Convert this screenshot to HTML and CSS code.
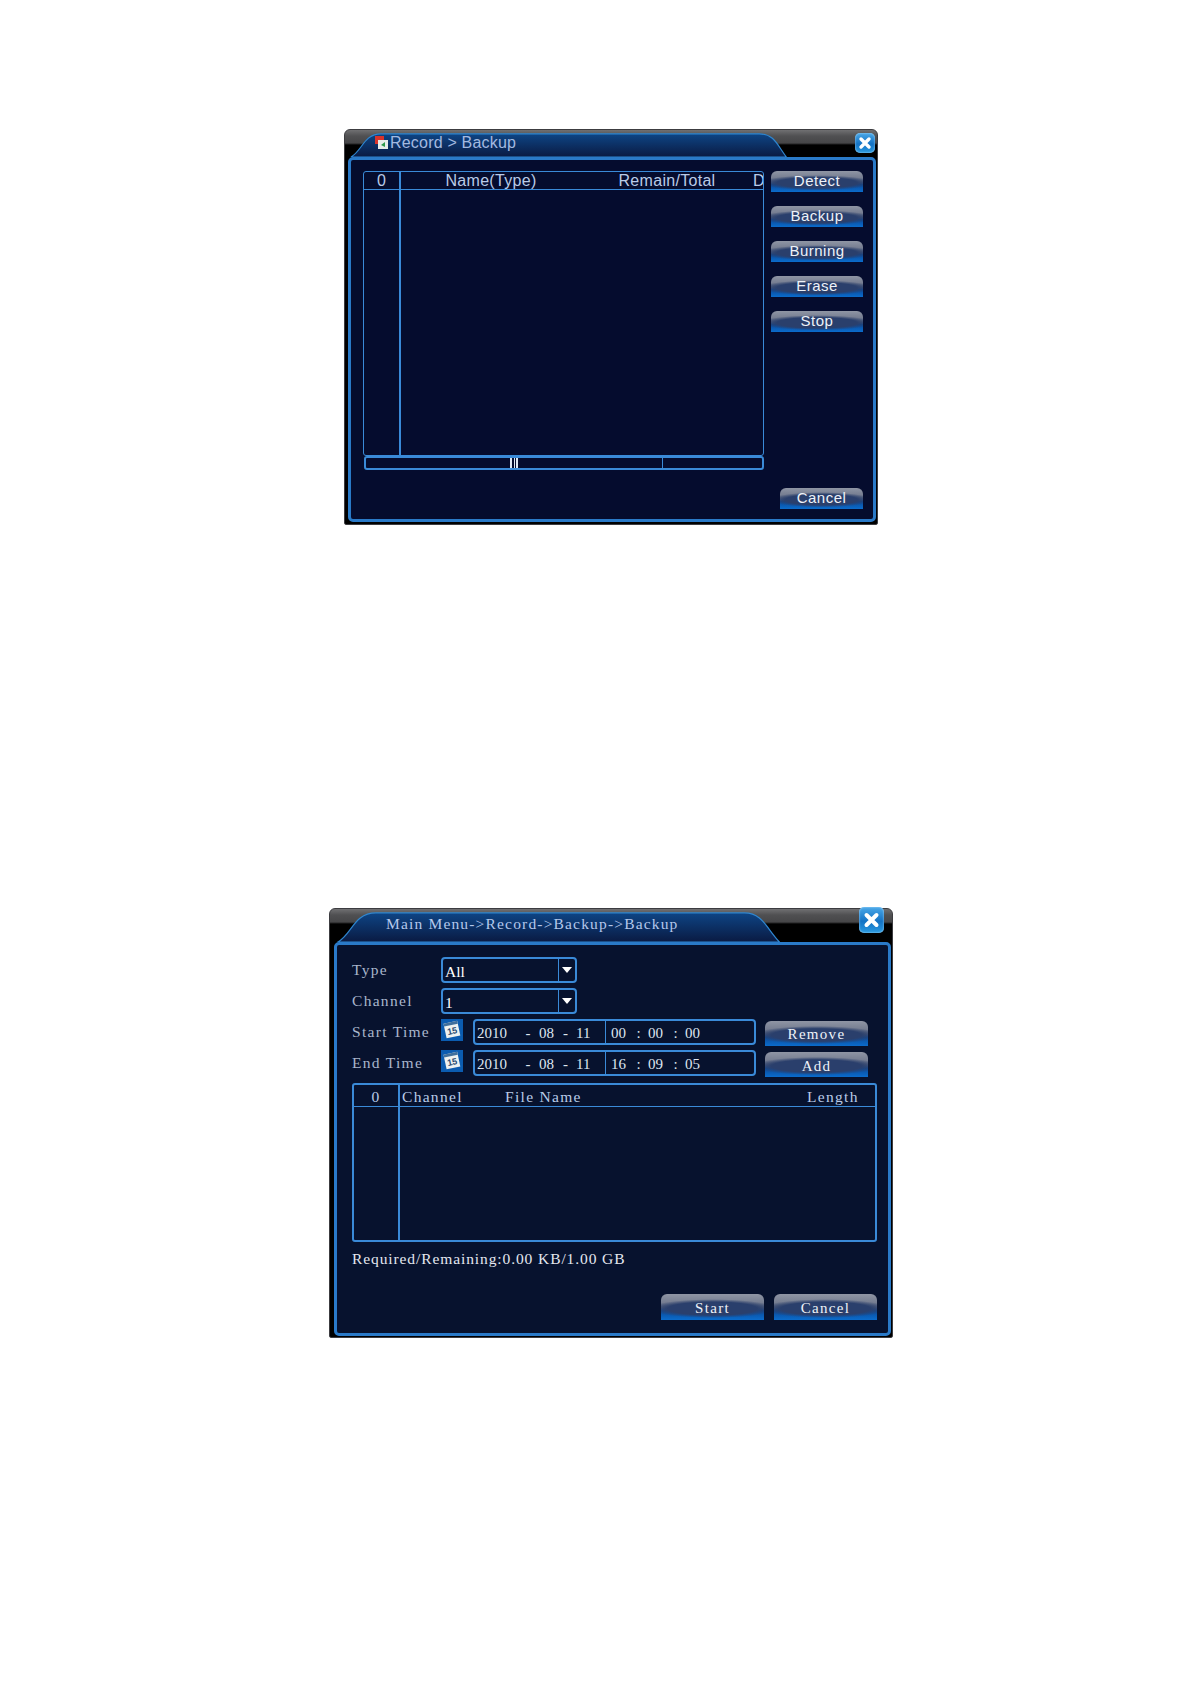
FILE: index.html
```html
<!DOCTYPE html>
<html lang="en">
<head>
    <meta charset="UTF-8">
    <meta name="viewport" content="width=device-width, initial-scale=1.0">
    <title>Record backup</title>
    <link rel="stylesheet" href="styles.css">
</head>
<body>
    <div class="window detect">
        <div class="titlebar">
            <svg class="tab" viewBox="0 0 534 28" preserveAspectRatio="none">
                <defs>
                    <linearGradient id="tabfill" x1="0" y1="0" x2="0" y2="1">
                        <stop offset="0" stop-color="#0e4585"/>
                        <stop offset="1" stop-color="#0a1a42"/>
                    </linearGradient>
                </defs>
                <path d="M6 28 C17 22 19 4 36 4 L416 4 C431 4 434 16 443 28 Z" fill="url(#tabfill)" stroke="#2f86d0" stroke-width="1.2"/>
            </svg>
            <svg class="menuicon" viewBox="0 0 13 13">
                <rect x="0" y="0" width="9" height="8" fill="#d8342c"/>
                <rect x="3" y="4" width="10" height="9" fill="#e8ece8"/>
                <path d="M6 9 L10 6 L10 11 Z" fill="#2f9a4a"/>
            </svg>
            <span class="titletext">Record &gt; Backup</span>
            <div class="close">
                <svg viewBox="0 0 20 20"><path d="M6 6 L14 14 M14 6 L6 14" stroke="#fff" stroke-width="3.4" stroke-linecap="round"/></svg>
            </div>
        </div>
        <div class="panel">
            <div class="main">
                <div class="listside">
                    <div class="table devices">
                        <div class="thead">
                            <span class="cell c0">0</span>
                            <span class="cell c1">Name(Type)</span>
                            <span class="cell c2">Remain/Total</span>
                            <span class="cell c3">D</span>
                        </div>
                        <div class="tbody"><div class="c0"></div></div>
                    </div>
                    <div class="scroll">
                        <div class="thumb"><span class="grip"></span></div>
                    </div>
                </div>
                <div class="actions">
                    <div class="btn">Detect</div>
                    <div class="btn">Backup</div>
                    <div class="btn">Burning</div>
                    <div class="btn">Erase</div>
                    <div class="btn">Stop</div>
                    <div class="btn cancel">Cancel</div>
                </div>
            </div>
        </div>
    </div>

    <div class="window files">
        <div class="titlebar">
            <svg class="tab" viewBox="0 0 564 34" preserveAspectRatio="none">
                <path d="M8 34 C22 26 24 4 46 4 L416 4 C434 4 438 20 451 34 Z" fill="url(#tabfill)" stroke="#2f86d0" stroke-width="1.2"/>
            </svg>
            <span class="titletext">Main Menu-&gt;Record-&gt;Backup-&gt;Backup</span>
            <div class="close">
                <svg viewBox="0 0 20 20"><path d="M6 6 L14 14 M14 6 L6 14" stroke="#fff" stroke-width="3.2" stroke-linecap="round"/></svg>
            </div>
        </div>
        <div class="panel">
            <div class="row">
                <span class="label">Type</span>
                <div class="select"><span class="value">All</span><span class="arrow"></span></div>
            </div>
            <div class="row">
                <span class="label">Channel</span>
                <div class="select"><span class="value">1</span><span class="arrow"></span></div>
            </div>
            <div class="row">
                <span class="label">Start Time</span>
                <svg class="cal" viewBox="0 0 22 22">
                    <rect width="22" height="22" fill="#0b5cb0"/>
                    <g transform="rotate(-12 11 11)">
                        <rect x="4" y="3" width="14" height="15" fill="#eef2f0"/>
                        <rect x="4" y="3" width="14" height="3" fill="#3f6f9c"/>
                        <text x="11" y="15" text-anchor="middle" class="caltext">15</text>
                    </g>
                </svg>
                <div class="datebox">
                    <div class="dseg first"><span class="yr">2010</span><span class="sep s1">-</span><span class="mm">08</span><span class="sep s2">-</span><span class="mm">11</span></div>
                    <div class="dseg second"><span class="hh">00</span><span class="sep s3">:</span><span class="hh">00</span><span class="sep s3">:</span><span class="hh">00</span></div>
                </div>
                <div class="btn wide">Remove</div>
            </div>
            <div class="row">
                <span class="label">End Time</span>
                <svg class="cal" viewBox="0 0 22 22">
                    <rect width="22" height="22" fill="#0b5cb0"/>
                    <g transform="rotate(-12 11 11)">
                        <rect x="4" y="3" width="14" height="15" fill="#eef2f0"/>
                        <rect x="4" y="3" width="14" height="3" fill="#3f6f9c"/>
                        <text x="11" y="15" text-anchor="middle" class="caltext">15</text>
                    </g>
                </svg>
                <div class="datebox">
                    <div class="dseg first"><span class="yr">2010</span><span class="sep s1">-</span><span class="mm">08</span><span class="sep s2">-</span><span class="mm">11</span></div>
                    <div class="dseg second"><span class="hh">16</span><span class="sep s3">:</span><span class="hh">09</span><span class="sep s3">:</span><span class="hh">05</span></div>
                </div>
                <div class="btn wide low">Add</div>
            </div>
            <div class="table filelist">
                <div class="thead">
                    <span class="cell c0">0</span>
                    <span class="cell chan">Channel</span>
                    <span class="cell fname">File Name</span>
                    <span class="cell flen">Length</span>
                </div>
                <div class="tbody"><div class="c0"></div></div>
            </div>
            <div class="required">Required/Remaining:0.00 KB/1.00 GB</div>
            <div class="bottombtns">
                <div class="btn wide low">Start</div>
                <div class="btn wide low">Cancel</div>
            </div>
        </div>
    </div>
</body>
</html>
```

FILE: styles.css
```css
*{
    margin: 0;
    padding: 0;
    box-sizing: border-box;
}
body{
    background-color: #fff;
    height: 1684px;
    overflow: hidden;
    padding-top: 129px;
}
.window{
    border: 1px solid #3c3c40;
    border-radius: 6px 6px 2px 2px;
    background: linear-gradient(#707072 0, #505052 6px, #464648 13px, #000 15px);
    color: #fff;
}
.window.detect{
    width: 534px;
    height: 396px;
    margin-left: 344px;
    font-family: "Liberation Sans", sans-serif;
}
.window.files{
    width: 564px;
    height: 430px;
    margin-left: 329px;
    margin-top: 383px;
    font-family: "Liberation Serif", serif;
}
.titlebar{
    position: relative;
    display: flex;
    align-items: center;
}
.detect .titlebar{
    height: 27px;
    padding-left: 30px;
    padding-bottom: 2px;
}
.files .titlebar{
    height: 33px;
    padding-left: 56px;
    padding-bottom: 4px;
}
.tab{
    position: absolute;
    left: 0;
    top: 0;
    width: 100%;
    height: 100%;
}
.menuicon{
    position: relative;
    width: 13px;
    height: 13px;
    margin-right: 2px;
}
.titletext{
    position: relative;
}
.detect .titletext{
    font-size: 16px;
    letter-spacing: 0.2px;
    color: #a3b9e0;
}
.files .titletext{
    font-size: 15.5px;
    letter-spacing: 1.17px;
    color: #b4c8ec;
}
.close{
    position: absolute;
    border-radius: 5px;
    background: linear-gradient(#4aa8e8, #1472c4 55%, #2a9ae0);
    box-shadow: inset 0 0 2px #bfe4ff;
}
.close svg{
    display: block;
    width: 100%;
    height: 100%;
}
.detect .close{
    left: 510px;
    top: 3px;
    width: 20px;
    height: 20px;
}
.files .close{
    left: 529px;
    top: -2px;
    width: 25px;
    height: 26px;
}
.panel{
    border: 3px solid #2a7ac8;
    border-radius: 5px;
}
.detect .panel{
    width: 528px;
    height: 365px;
    margin-left: 3px;
    padding: 11px 9px 10px 12px;
    background-color: #050c2e;
}
.files .panel{
    width: 557px;
    height: 394px;
    margin-left: 4px;
    padding: 12px 11px 0 15px;
    background-color: #07122e;
}
.main{
    display: flex;
    gap: 7px;
    height: 100%;
}
.listside{
    width: 401px;
}
.table{
    border: 1px solid #3a8ad8;
    border-radius: 3px;
    display: flex;
    flex-direction: column;
    overflow: hidden;
}
.devices{
    height: 285px;
}
.filelist{
    width: 525px;
    height: 159px;
    margin-top: 7px;
    border-width: 2px;
}
.thead{
    display: flex;
    flex: none;
    height: 18px;
    border-bottom: 1px solid #3a8ad8;
    font-size: 16px;
    line-height: 18px;
    letter-spacing: 0.3px;
    color: #b9cbe8;
    white-space: nowrap;
}
.filelist .thead{
    height: 22px;
    font-size: 15.5px;
    line-height: 23px;
    letter-spacing: 1.3px;
}
.cell{
    display: block;
    text-align: center;
}
.devices .c0{
    width: 37px;
    border-right: 2px solid #3a8ad8;
}
.filelist .c0{
    width: 46px;
    border-right: 2px solid #3a8ad8;
}
.tbody{
    flex: 1;
    display: flex;
}
.c1{
    width: 180px;
}
.c2{
    width: 172px;
}
.c3{
    width: 10px;
}
.chan{
    width: 68px;
    padding-left: 2px;
    text-align: left;
}
.fname{
    width: 100px;
    margin-left: 37px;
    text-align: left;
}
.flen{
    width: 65px;
    margin-left: 202px;
    text-align: left;
}
.scroll{
    height: 14px;
    margin-left: 1px;
    border: 2px solid #3a8ad8;
    border-radius: 3px;
}
.thumb{
    width: 297px;
    height: 100%;
    border-right: 1px solid #3a8ad8;
    display: flex;
    justify-content: center;
}
.grip{
    width: 8px;
    height: 100%;
    border-left: 2px solid #dfe8f4;
    border-right: 2px solid #dfe8f4;
    background: linear-gradient(#dfe8f4, #dfe8f4) center / 1px 100% no-repeat;
}
.actions{
    width: 92px;
    display: flex;
    flex-direction: column;
    gap: 14px;
}
.btn{
    position: relative;
    height: 21px;
    border-radius: 6px 6px 0 0;
    background:
        radial-gradient(ellipse 62% 36% at 50% 56%, #2a3f6c 0, #2a3f6c 70%, transparent 100%),
        linear-gradient(#8f95a4 0, #747c90 35%, #5a6680 52%, #0a4a9a 64%, #0b6ccc 100%);
    text-align: center;
    font-size: 15px;
    line-height: 20px;
    letter-spacing: 0.5px;
    color: #eef2f8;
}
.btn.cancel{
    width: 83px;
    margin-top: auto;
    margin-left: 9px;
}
.btn.wide{
    width: 103px;
    height: 25px;
    line-height: 27px;
    letter-spacing: 1.3px;
}
.btn.wide.low{
    line-height: 29px;
}
.row{
    display: flex;
    align-items: flex-start;
    height: 26px;
    margin-bottom: 5px;
}
.label{
    width: 89px;
    font-size: 15.5px;
    line-height: 25px;
    letter-spacing: 1.3px;
    color: #a9b6cc;
    white-space: nowrap;
}
.select{
    display: flex;
    width: 136px;
    height: 26px;
    border: 2px solid #3a8ad8;
    border-radius: 4px;
}
.value{
    flex: 1;
    padding-left: 2px;
    font-size: 15.5px;
    line-height: 25px;
    border-right: 1px solid #3a8ad8;
}
.arrow{
    display: flex;
    width: 16px;
    justify-content: center;
    padding-top: 8px;
}
.arrow::before{
    content: "";
    border-left: 5px solid transparent;
    border-right: 5px solid transparent;
    border-top: 6px solid #fff;
    height: 0;
}
.cal{
    width: 22px;
    height: 22px;
    margin-right: 10px;
}
.caltext{
    font-family: "Liberation Sans", sans-serif;
    font-size: 9px;
    font-weight: bold;
    fill: #274a72;
}
.datebox{
    display: flex;
    width: 283px;
    height: 26px;
    border: 2px solid #3a8ad8;
    border-radius: 4px;
    margin-right: 9px;
    font-size: 15px;
    line-height: 25px;
    color: #dfe6f0;
}
.dseg{
    display: flex;
    white-space: nowrap;
}
.first{
    width: 131px;
    padding-left: 2px;
    border-right: 1px solid #3a8ad8;
}
.second{
    padding-left: 5px;
}
.yr{
    width: 40px;
}
.mm{
    width: 16px;
}
.hh{
    width: 18px;
}
.sep{
    text-align: center;
}
.s1{
    width: 22px;
}
.s2{
    width: 21px;
}
.s3{
    width: 19px;
}
.row .btn.wide{
    margin-top: 2px;
}
.required{
    margin-top: 8px;
    font-size: 15.5px;
    letter-spacing: 0.9px;
    color: #e4e8f0;
}
.bottombtns{
    display: flex;
    justify-content: flex-end;
    gap: 10px;
    margin-top: 26px;
}
.bottombtns .btn{
    height: 26px;
}
```
